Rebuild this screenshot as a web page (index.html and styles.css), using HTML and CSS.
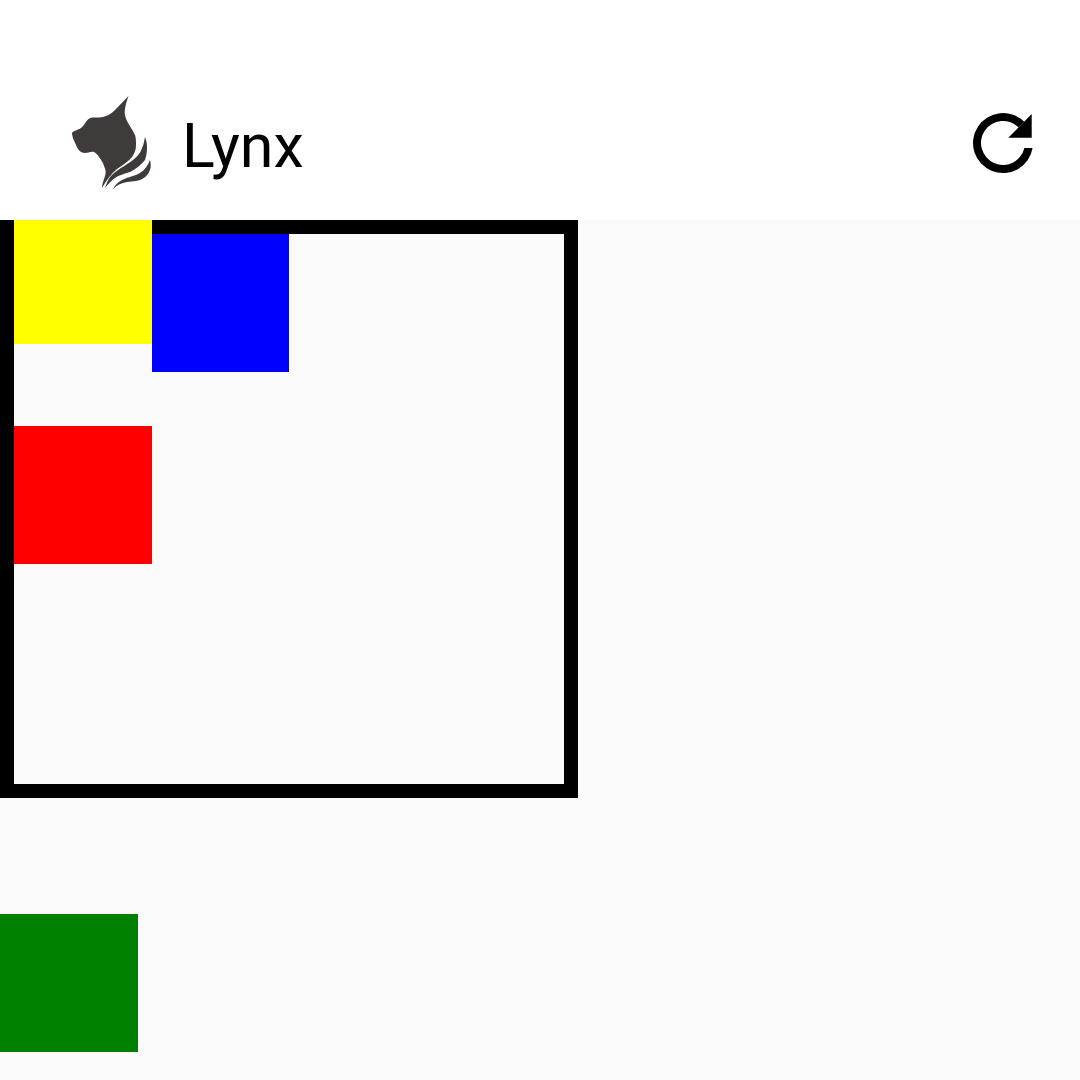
FILE: index.html
```html
<!DOCTYPE html>
<html lang="en">
<head>
    <meta charset="UTF-8">
    <title>Lynx</title>
    <link rel="stylesheet" href="styles.css">
</head>
<body>
    <header class="app-bar">
        <svg class="logo" viewBox="0 0 100 115" aria-hidden="true">
            <path d="M68.5 11L55 25C51 29 47 31 43 32C38 33 33 32 30 33C26 35 25 40 21 43C18 45 13 46 12 48C12 52 15 58 18 64C20 67 23 68 25 68C28 68 31 66 34 67C36 68 38 70 39 72C41 75 43 77 44 81C46 85 46 88 45 91C44 95 42 98 42 103C46 96 51 89 57 84C63 80 69 76 72 72C75 68 76 64 76 60C76 56 76 53 75 50C72 43 66 37 65 30C64 26 66 18 68.5 11Z"/>
            <path d="M45 103C47 96 50 91 54 88C60 83 68 79 73 75C78 71 81 67 82 63C84 59 84 56 85 52C87 57 87 60 87 63C87 68 86 72 85 75C81 80 76 84 70 87C64 89 59 90 55 93C51 96 48 99 45 103Z"/>
            <path d="M53 104C55 100 58 97 62 95C68 92 75 91 80 88C85 85 88 80 90 75C91 79 91 82 90 85C88 90 85 93 80 95C75 97 68 96 63 98C59 99 56 101 53 104Z"/>
        </svg>
        <span class="title">Lynx</span>
        <svg class="refresh" viewBox="0 0 85 85" aria-hidden="true">
            <path d="M72.6 48A30 30 0 1 1 64.2 21.8L58.6 27.4A22 22 0 1 0 64.4 48Z"/>
            <path d="M71.7 14V37.7H48.3Z"/>
        </svg>
    </header>

    <main class="content">
        <div class="frame">
            <div class="row">
                <div class="square yellow"></div>
                <div class="square blue"></div>
            </div>
            <div class="square red"></div>
        </div>
        <div class="square green"></div>
    </main>
</body>
</html>
```

FILE: styles.css
```css
html, body {
    margin: 0;
    height: 100%;
}
body {
    display: flex;
    flex-direction: column;
    background-color: #fafafa;
    font-family: Roboto, "Liberation Sans", sans-serif;
}
.app-bar {
    display: flex;
    align-items: center;
    box-sizing: border-box;
    height: 220px;
    padding: 65px 35px 0 60px;
    background-color: #fff;
}
.logo {
    width: 100px;
    height: 115px;
    fill: #3f3b3b;
}
.title {
    margin: 6px 0 0 22px;
    font-size: 61px;
    color: #000;
}
.refresh {
    width: 85px;
    height: 85px;
    margin-left: auto;
    fill: #000;
}
.content {
    flex: 1;
}
.frame {
    box-sizing: border-box;
    width: 578px;
    height: 578px;
    border: 14px solid #000;
}
.row {
    display: flex;
    align-items: flex-start;
}
.square {
    width: 138px;
    height: 138px;
}
.yellow {
    height: 124px;
    margin-top: -14px;
    background-color: #ff0;
}
.blue {
    width: 137px;
    background-color: #00f;
}
.red {
    margin-top: 54px;
    background-color: #f00;
}
.green {
    margin-top: 116px;
    background-color: #008000;
}
```
